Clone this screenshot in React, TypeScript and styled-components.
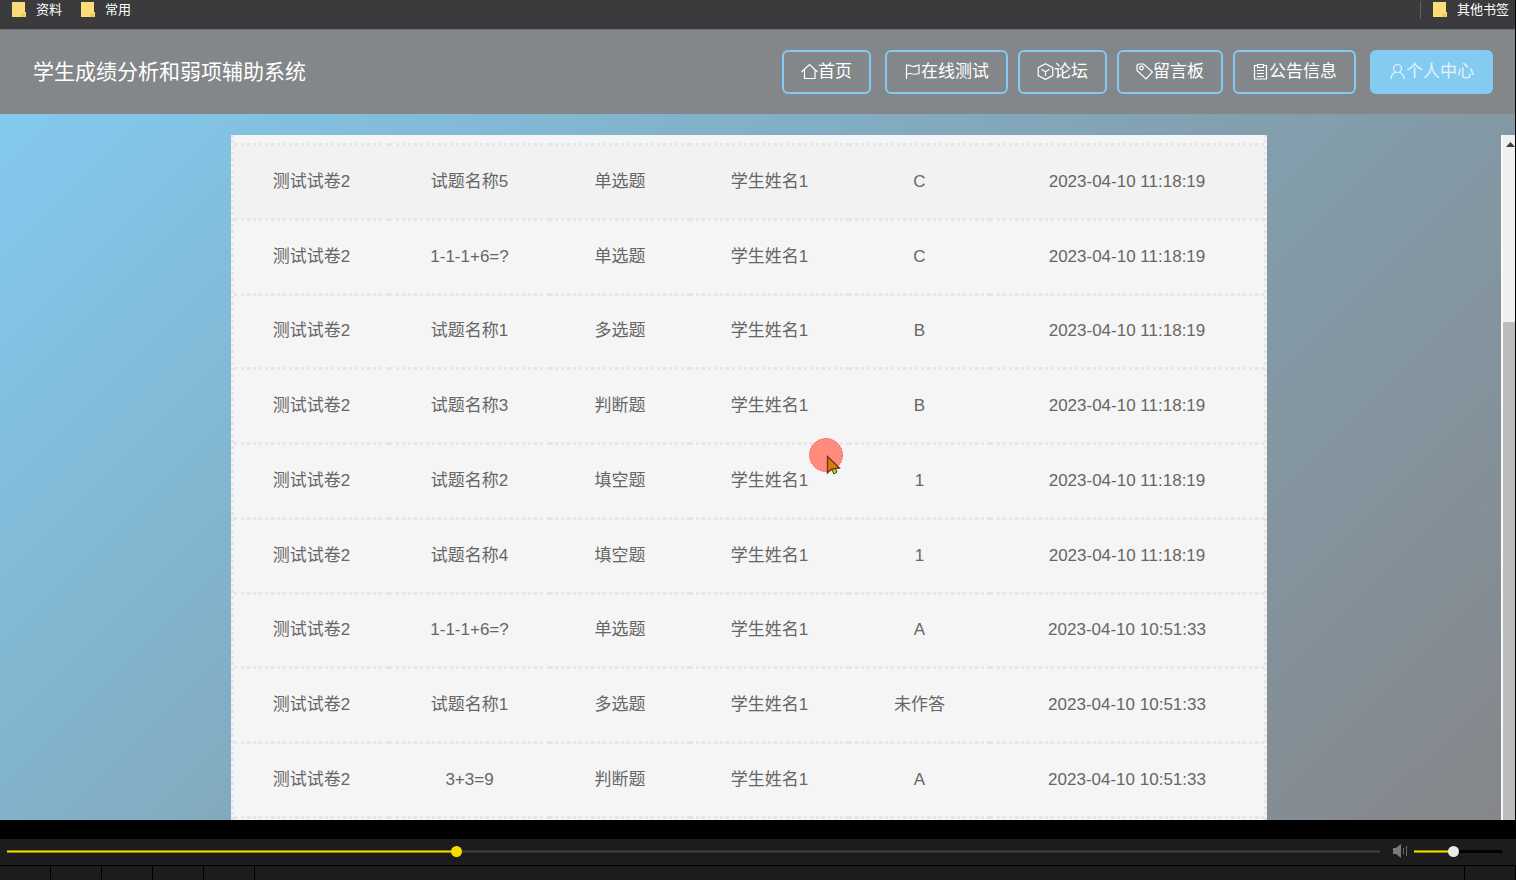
import React, { useState } from "react";
import styled, { createGlobalStyle } from "styled-components";

const GlobalStyle = createGlobalStyle`
  *, *::before, *::after { box-sizing: border-box; }
  body {
    margin: 0;
    background: #000;
    font-family: "Liberation Sans", "Noto Sans CJK SC", sans-serif;
  }
`;

const Page = styled.div`
  display: flex;
  flex-direction: column;
  min-height: 100vh;
`;

const Video = styled.div`
  position: relative;
  display: flex;
  flex-direction: column;
  flex: 1;
  border-right: 1px solid #000;
`;

const Bookmarks = styled.nav`
  display: flex;
  align-items: center;
  gap: 19px;
  height: 29px;
  padding: 0 6px 9px 12px;
  background: #3b3a3d;
`;

const Bookmark = styled.a`
  display: flex;
  align-items: center;
  gap: 10px;
  color: #fff;
  font-size: 13px;
  line-height: 20px;
  text-decoration: none;
`;

const OtherBookmarks = styled.div`
  display: flex;
  align-items: center;
  margin-left: auto;
  padding-left: 12px;
  border-left: 1px solid #626166;
  height: 18px;
`;

const Header = styled.header`
  display: flex;
  align-items: center;
  justify-content: space-between;
  height: 85px;
  padding: 0 22px 0 33px;
  background: #838789;
  border-top: 1px solid #727477;
`;

const Title = styled.h1`
  margin: 0;
  color: #fff;
  font-size: 21px;
  font-weight: 400;
  line-height: 32px;
`;

const Nav = styled.nav`
  display: flex;
  gap: 14px;
`;

const NavGroup = styled.div`
  display: flex;
  gap: 10px;
`;

const NavLink = styled.a<{ $active?: boolean }>`
  display: flex;
  align-items: center;
  height: 44px;
  padding: 0 17px;
  border: 2px solid #84cbf1;
  border-radius: 6px;
  background: ${(p) => (p.$active ? "#84cbf1" : "transparent")};
  color: ${(p) => (p.$active ? "#e4f4fc" : "#fff")};
  font-size: 17px;
  line-height: 24px;
  white-space: nowrap;
  text-decoration: none;
`;

const NavIcon = styled.svg`
  width: 17px;
  height: 17px;
  margin-bottom: 2px;
  fill: none;
  stroke: currentColor;
  stroke-width: 1.2;
`;

const Main = styled.main`
  display: flex;
  flex: 1;
  padding-top: 21px;
  background: linear-gradient(135deg, #83caef 0%, #82a1b1 54%, #85868a 100%);
`;

const Content = styled.div`
  display: flex;
  justify-content: center;
  flex: 1;
  padding-right: 3px;
`;

const Panel = styled.section`
  display: flex;
  width: 100%;
  max-width: 1036px;
  padding-top: 8px;
  background: #f6f5f5;
  border: 3px dotted #e6e6e6;
  border-width: 0 3px;
`;

const Records = styled.table`
  width: 100%;
  height: 676px;
  table-layout: fixed;
  border-collapse: collapse;
`;

const Row = styled.tr`
  border-top: 3px dotted #e6e6e6;
  border-bottom: 3px dotted #e6e6e6;
  &:first-child { background: #f2f2f2; }
`;

const Cell = styled.td`
  padding: 0;
  color: #666;
  font-size: 17px;
  line-height: 24px;
  text-align: center;
`;

const ScrollTrack = styled.div`
  display: flex;
  flex-direction: column;
  width: 14px;
  background: #f0f0f0;
  border-left: 2px solid #fafafa;
`;

const ScrollUp = styled.button`
  display: flex;
  align-items: center;
  justify-content: flex-end;
  height: 18px;
  padding: 0;
  border: 0;
  background: transparent;
`;

const ScrollThumb = styled.div`
  flex: 1;
  margin-top: 169px;
  background: #bcbcbc;
`;

const Pointer = styled.div`
  position: absolute;
  left: 809px;
  top: 438px;
`;

const Player = styled.footer`
  margin-top: 19px;
  background: #1c1c1c;
`;

const Controls = styled.div`
  display: flex;
  align-items: center;
  height: 26px;
  padding: 0 14px 2px 7px;
`;

const Slider = styled.input<{ $size: number; $thumb: string; $rest: string }>`
  appearance: none;
  display: block;
  height: 12px;
  margin: 0;
  background: transparent;

  &::-webkit-slider-runnable-track {
    height: 3px;
    background:
      linear-gradient(#948600, #948600 1px, #f7e000 1px, #f7e000 2px, #948600 2px) 0 0 / var(--fill) 100% no-repeat,
      ${(p) => p.$rest};
  }

  &::-webkit-slider-thumb {
    appearance: none;
    width: ${(p) => p.$size}px;
    height: ${(p) => p.$size}px;
    margin-top: -4px;
    border-radius: 50%;
    background: ${(p) => p.$thumb};
  }
`;

const Progress = styled(Slider)`
  flex: 1;
  min-width: 0;
`;

const Volume = styled(Slider)`
  width: 88px;
`;

const Mute = styled.button`
  display: flex;
  padding: 0;
  margin: 0 6px 0 12px;
  border: 0;
  background: transparent;
`;

const Tray = styled.div`
  display: flex;
  height: 15px;
  border-top: 1px solid #000;
`;

const Slot = styled.div<{ $wide?: boolean }>`
  flex: ${(p) => (p.$wide ? "1" : "0 0 51px")};
  border-right: 1px solid #000;
`;

const Folder = () => (
  <svg width="14" height="16" viewBox="0 0 14 16" aria-hidden="true">
    <path d="M0 0h13v10h1v5H0z" fill="#fbdc79" />
    <path d="M9 14v-3h4v4H9z" fill="#f3ca55" />
  </svg>
);

const iconPaths: Record<string, React.ReactNode> = {
  home: <path d="M0.500 9 8.500 1.500 16.500 9M3.500 6.500V15.500h10.500V6.500" />,
  flag: <path d="M2.500 1.500V16M2.500 2.500c3-1.500 4.500 1.500 7 1 2 0 3.500-1 5.500-1.500v8.500c-3 1-4.500 1-6.500 0.500-2-1-4-0.500-6 0.500" />,
  cube: <path d="M8.500 0.800 15.800 4.700v7.900L8.500 16.400 1.200 12.600V4.700zM4.500 6.300l4 2.500 4-2.500M8.500 8.800V13" />,
  tag: (
    <>
      <path d="M1 2.500 2.500 1h5L16.500 9l-6.500 7L1 7.500z" />
      <circle cx="5.500" cy="5" r="1.800" />
    </>
  ),
  board: <path d="M5 2.500H2.500v13.500h12V2.500H12M5.500 1.500h6v3h-6zM5 7.500h7M5 10.500h7M5 13.500h7" />,
  user: (
    <>
      <circle cx="8.500" cy="5.500" r="4" />
      <path d="M2 16c0-3.500 2-5.800 4.500-6.800M15 16c0-3.500-2-5.800-4.500-6.800" />
    </>
  ),
};

const Icon = ({ name }: { name: string }) => (
  <NavIcon viewBox="0 0 17 17" aria-hidden="true">
    {iconPaths[name]}
  </NavIcon>
);

const menu = [
  { icon: "flag", label: "在线测试" },
  { icon: "cube", label: "论坛" },
  { icon: "tag", label: "留言板" },
  { icon: "board", label: "公告信息" },
];

const columns = [155, 161, 140, 159, 141, 274];

const first = "2023-04-10 11:18:19";
const second = "2023-04-10 10:51:33";
const records = [
  ["测试试卷2", "试题名称5", "单选题", "学生姓名1", "C", first],
  ["测试试卷2", "1-1-1+6=?", "单选题", "学生姓名1", "C", first],
  ["测试试卷2", "试题名称1", "多选题", "学生姓名1", "B", first],
  ["测试试卷2", "试题名称3", "判断题", "学生姓名1", "B", first],
  ["测试试卷2", "试题名称2", "填空题", "学生姓名1", "1", first],
  ["测试试卷2", "试题名称4", "填空题", "学生姓名1", "1", first],
  ["测试试卷2", "1-1-1+6=?", "单选题", "学生姓名1", "A", second],
  ["测试试卷2", "试题名称1", "多选题", "学生姓名1", "未作答", second],
  ["测试试卷2", "3+3=9", "判断题", "学生姓名1", "A", second],
];

const fill = (percent: number) => ({ "--fill": `${percent}%` }) as React.CSSProperties;

export default function App() {
  const [position, setPosition] = useState(326);
  const [volume, setVolume] = useState(44);

  return (
    <Page>
      <GlobalStyle />
      <Video>
        <Bookmarks>
          <Bookmark href="#"><Folder />资料</Bookmark>
          <Bookmark href="#"><Folder />常用</Bookmark>
          <OtherBookmarks>
            <Bookmark href="#"><Folder />其他书签</Bookmark>
          </OtherBookmarks>
        </Bookmarks>
        <Header>
          <Title>学生成绩分析和弱项辅助系统</Title>
          <Nav>
            <NavLink href="#"><Icon name="home" />首页</NavLink>
            <NavGroup>
              {menu.map((m) => (
                <NavLink key={m.label} href="#"><Icon name={m.icon} />{m.label}</NavLink>
              ))}
            </NavGroup>
            <NavLink href="#" $active><Icon name="user" />个人中心</NavLink>
          </Nav>
        </Header>
        <Main>
          <Content>
            <Panel>
              <Records>
                <colgroup>
                  {columns.map((w, i) => <col key={i} width={w} />)}
                </colgroup>
                <tbody>
                  {records.map((r, i) => (
                    <Row key={i}>
                      {r.map((c, j) => <Cell key={j}>{c}</Cell>)}
                    </Row>
                  ))}
                </tbody>
              </Records>
            </Panel>
          </Content>
          <ScrollTrack>
            <ScrollUp aria-label="向上滚动">
              <svg width="9" height="5" viewBox="0 0 9 5" aria-hidden="true">
                <path d="M0 5 4.500 0 9 5z" fill="#404040" />
              </svg>
            </ScrollUp>
            <ScrollThumb />
          </ScrollTrack>
        </Main>
        <Pointer>
          <svg width="36" height="40" viewBox="0 0 36 40" aria-hidden="true">
            <circle cx="17" cy="17" r="16.500" fill="#ff8b7c" stroke="#f0605c" strokeWidth="1" strokeDasharray="2 1" />
            <path d="M22 30l3-2 3 6-3 2z" fill="#a9e024" stroke="#4c3a08" strokeWidth="1" />
            <path d="M18.500 18.500V35l4-4 8-1z" fill="#dc7a10" stroke="#6d3210" strokeWidth="1.300" />
          </svg>
        </Pointer>
      </Video>
      <Player>
        <Controls>
          <Progress
            type="range" aria-label="播放进度" min={0} max={1000} value={position}
            onChange={(e) => setPosition(Number(e.target.value))}
            style={fill(position / 10)}
            $size={11} $thumb="#f7dc00"
            $rest="linear-gradient(#2c2c2c 1px, #444 1px, #444 2px, #2c2c2c 2px)"
          />
          <Mute aria-label="静音">
            <svg width="16" height="14" viewBox="0 0 16 14" aria-hidden="true">
              <path d="M1 4h3l5-4v14l-5-4H1z" fill="#7a7a7a" />
              <path d="M11.500 4v6M14.500 2v10" stroke="#6a6a6a" />
            </svg>
          </Mute>
          <Volume
            type="range" aria-label="音量" min={0} max={100} value={volume}
            onChange={(e) => setVolume(Number(e.target.value))}
            style={fill(volume)}
            $size={11} $thumb="#ebe8ea" $rest="#000"
          />
        </Controls>
        <Tray>
          <Slot /><Slot /><Slot /><Slot /><Slot /><Slot $wide />
          <Slot />
        </Tray>
      </Player>
    </Page>
  );
}
